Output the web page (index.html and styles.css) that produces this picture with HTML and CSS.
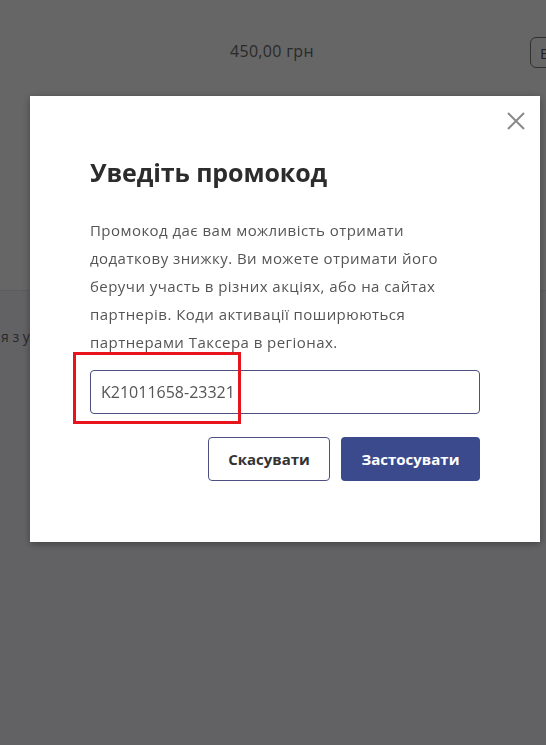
FILE: index.html
```html
<!DOCTYPE html>
<html lang="uk">
<head>
  <meta charset="UTF-8">
  <title>Уведіть промокод</title>
  <link rel="stylesheet" href="styles.css">
</head>
<body>

<div class="page">
  <div class="top-row">
    <span class="price">450,00 грн</span>
    <button class="buy-btn">В</button>
  </div>
  <div class="lower">
    <p class="terms">я з умовами</p>
  </div>
</div>

<div class="overlay">
  <div class="modal">
    <button class="close" aria-label="Закрити">
      <svg width="18" height="18" viewBox="0 0 18 18">
        <path d="M1 1 L17 17 M17 1 L1 17" stroke="#8a8a8a" stroke-width="2" fill="none"/>
      </svg>
    </button>
    <h2>Уведіть промокод</h2>
    <p class="desc">Промокод дає вам можливість отримати додаткову знижку. Ви можете отримати його беручи участь в різних акціях, або на сайтах партнерів. Коди активації поширюються партнерами Таксера в регіонах.</p>
    <input type="text" class="code" value="K21011658-23321">
    <div class="actions">
      <button class="btn btn-cancel">Скасувати</button>
      <button class="btn btn-apply">Застосувати</button>
    </div>
  </div>
  <div class="mark"></div>
</div>

</body>
</html>
```

FILE: styles.css
```css
body {
  margin: 0;
  font-family: 'Open Sans', 'Noto Sans', sans-serif;
  background: #f6f6fb;
  color: #333;
  overflow: hidden;
}
.page {
  height: 745px;
  display: flex;
  flex-direction: column;
}
.top-row {
  height: 291px;
  background: #fff;
  border-bottom: 1px solid #e6e6ea;
  display: flex;
  align-items: flex-start;
  padding-top: 37px;
  box-sizing: border-box;
}
.price {
  margin-left: 230px;
  margin-top: 3px;
  font-size: 16px;
  letter-spacing: 0.3px;
  color: #6a6a6a;
  flex: 1;
}
.buy-btn {
  flex: none;
  width: 30px;
  height: 31px;
  padding: 0 0 0 9px;
  margin-right: -14px;
  text-align: left;
  background: #fff;
  border: 1px solid #7a7a7a;
  border-radius: 6px;
  font-family: inherit;
  font-size: 15px;
  color: #555;
}
.lower {
  flex: 1;
}
.terms {
  margin: 36px 0 0 1px;
  font-size: 14px;
  color: #666;
}
.overlay {
  position: fixed;
  inset: 0;
  background: rgba(0, 0, 0, 0.6);
}
.modal {
  position: absolute;
  left: 30px;
  top: 96px;
  width: 510px;
  height: 446px;
  box-sizing: border-box;
  background: #fff;
  padding: 59px 60px 0 60px;
  box-shadow: 0 2px 8px rgba(0, 0, 0, 0.35);
}
.close {
  position: absolute;
  right: 15px;
  top: 16px;
  background: none;
  border: none;
  padding: 0;
  cursor: pointer;
}
h2 {
  margin: 0;
  font-size: 25px;
  font-weight: 700;
  color: #2c2c2c;
  letter-spacing: -0.1px;
}
.desc {
  margin: 27px 0 0;
  font-size: 15px;
  line-height: 28px;
  letter-spacing: 0.45px;
  color: #555;
}
.code {
  display: block;
  width: 100%;
  height: 44px;
  box-sizing: border-box;
  margin-top: 14px;
  padding: 0 10px;
  border: 1px solid #4d4f80;
  border-radius: 4px;
  font-family: inherit;
  font-size: 16px;
  color: #555;
}
.actions {
  display: flex;
  justify-content: flex-end;
  gap: 11px;
  margin-top: 23px;
}
.btn {
  height: 44px;
  border-radius: 4px;
  font-family: inherit;
  font-size: 15px;
  font-weight: 700;
  cursor: pointer;
}
.btn-cancel {
  width: 122px;
  background: #fff;
  border: 1px solid #4d4f80;
  color: #333;
}
.btn-apply {
  width: 139px;
  background: #3b4a8c;
  border: none;
  color: #fff;
}
.mark {
  position: absolute;
  left: 73px;
  top: 352px;
  width: 162px;
  height: 66px;
  border: 3px solid #e8141b;
}
```
